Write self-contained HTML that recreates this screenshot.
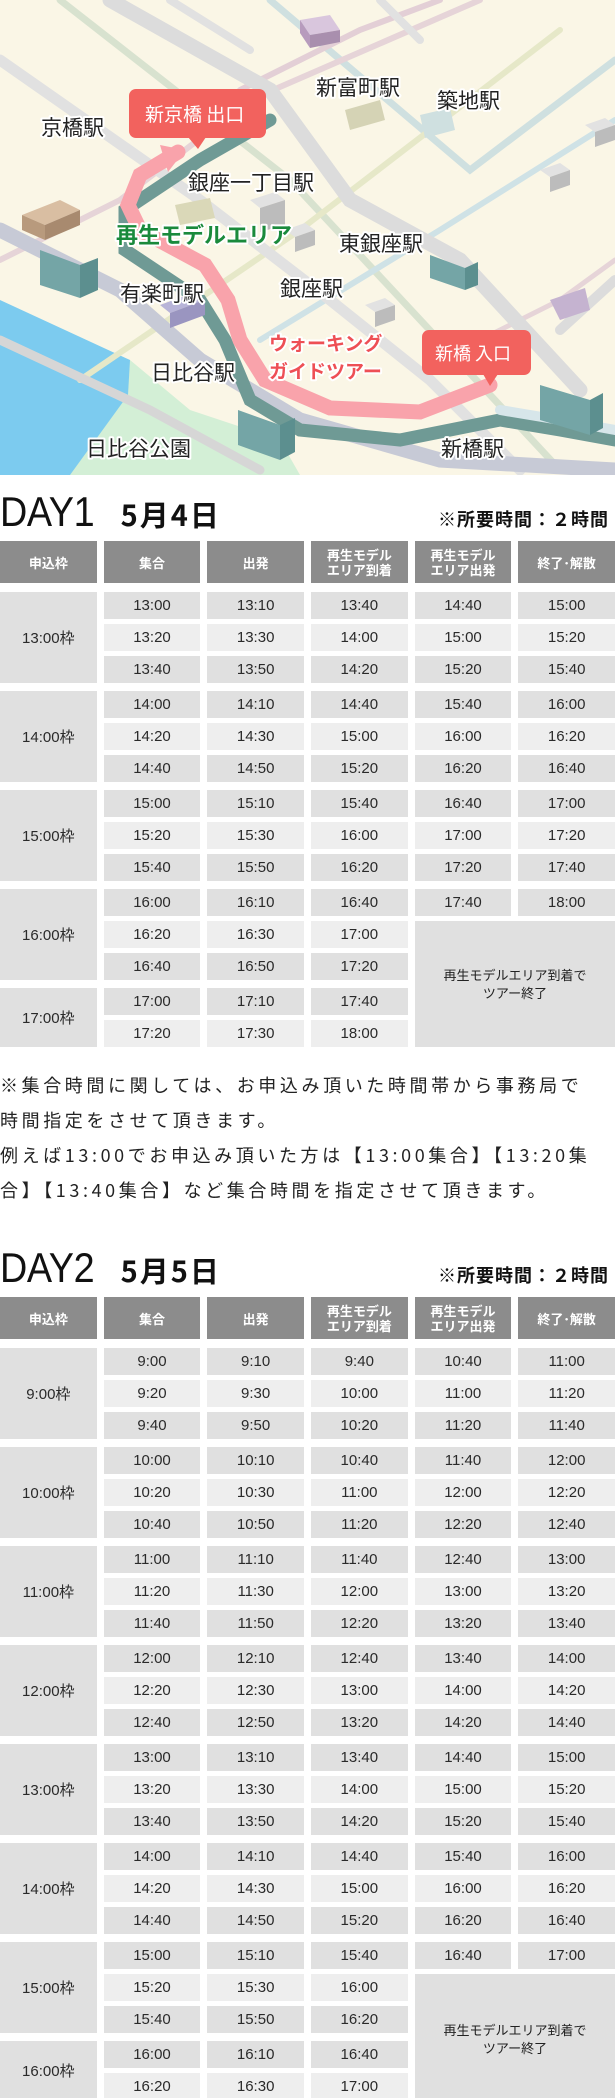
<!DOCTYPE html>
<html><head><meta charset="utf-8">
<style>
*{margin:0;padding:0;box-sizing:border-box}
html,body{width:615px;height:2098px;overflow:hidden;background:#fff}
body{position:relative;font-family:"Liberation Sans","Noto Sans CJK JP",sans-serif;color:#222}
.map{position:absolute;left:0;top:0;width:615px;height:475px}
.title{position:absolute;left:0;width:615px;display:flex;align-items:baseline;line-height:42px}
.day{font-size:42px;font-family:"Liberation Sans",sans-serif;transform:scaleX(.9);transform-origin:left;letter-spacing:-.5px;color:#111}
.date{font-size:29px;font-weight:bold;margin-left:16px;letter-spacing:2px;font-family:"Noto Sans CJK JP",sans-serif;color:#111}
.req{margin-left:auto;margin-right:6px;font-size:18px;font-weight:bold;letter-spacing:1px;font-family:"Noto Sans CJK JP",sans-serif;color:#111}
.hdr{position:absolute;left:0;width:615px;height:42px;display:grid;grid-template-columns:repeat(6,1fr);column-gap:7px}
.hdr div{background:#8c8c8c;color:#fff;font-weight:bold;font-size:13px;line-height:15px;display:flex;align-items:center;justify-content:center;text-align:center;font-family:"Noto Sans CJK JP",sans-serif}
.tbl{position:absolute;left:0;width:615px}
.g{display:grid;grid-template-columns:repeat(6,1fr);column-gap:7px;row-gap:5px;grid-auto-rows:27px;margin-bottom:8px}
.g div{display:flex;align-items:center;justify-content:center;font-size:15px;color:#2a2a2a}
.l{background:#e0e0e0;grid-column:1}
.d{background:#e0e0e0}
.w{background:#eeeeee}
.e{background:transparent}
.m{position:absolute;left:415px;width:200px;background:#e0e0e0;display:flex;align-items:center;justify-content:center;text-align:center;font-size:13px;line-height:18px;font-family:"Noto Sans CJK JP",sans-serif;color:#222}
.note{position:absolute;left:0;top:1068px;width:615px;font-size:18px;line-height:35px;letter-spacing:3.6px;font-family:"Noto Sans CJK JP",sans-serif;color:#222;white-space:nowrap}
</style></head><body>

<svg class="map" viewBox="0 0 615 475" xmlns="http://www.w3.org/2000/svg">
<rect width="615" height="475" fill="#faf6e6"/>
<path d="M0 330 L130 360 L190 410 L280 440 L300 475 L0 475Z" fill="#d3efd6"/>
<path d="M0 300 L130 360 L128 395 L70 475 L0 475Z" fill="#7ccbef"/>
<g fill="none" stroke-linecap="round">
<path d="M60 0 L290 180 L560 470" stroke="#d8e2cf" stroke-width="7"/>
<path d="M270 0 L470 170 L615 60" stroke="#cfe0e0" stroke-width="7"/>
<path d="M240 90 L360 30 L440 0" stroke="#e3cfd6" stroke-width="6"/>
<path d="M0 260 L120 200 L250 100 L480 0" stroke="#e6d4d8" stroke-width="6"/>
<path d="M80 380 L300 230 L560 30" stroke="#e6e8c8" stroke-width="6"/>
<path d="M260 340 L440 230 L615 120" stroke="#cfe2e6" stroke-width="6"/>
<path d="M440 360 L560 300 L615 260" stroke="#e6d4d8" stroke-width="5"/>
<path d="M110 0 L270 90 L350 200 L460 260 L580 390" stroke="#dcdcdc" stroke-width="15"/>
<path d="M0 60 L200 200 L330 300 L430 380 L520 470" stroke="#e1e1e1" stroke-width="11"/>
<path d="M0 230 L120 290 L200 360 L300 420 L440 460 L615 470" stroke="#c7cad6" stroke-width="15"/>
<path d="M0 340 L150 410 L260 470" stroke="#d6d6d6" stroke-width="9"/>
<path d="M560 330 L615 280" stroke="#dcdcdc" stroke-width="10"/>
<path d="M380 0 L420 40" stroke="#e1e1e1" stroke-width="8"/>
<path d="M170 0 L250 50" stroke="#e1e1e1" stroke-width="8"/>
<path d="M270 120 L200 160 L125 210 L125 250 L200 300 L225 340 L250 400 L300 430 L400 440 L500 420 L560 430 L615 440" stroke="#6f9a95" stroke-width="13"/>
<path d="M500 410 L560 420 L615 430" stroke="#d7e6ea" stroke-width="10"/>
<path d="M178 152 L140 175 L128 205 L140 230 L205 265 L228 300 L240 340 L265 380 L330 408 L420 412 L490 385" stroke="#f9a3ab" stroke-width="15"/>
</g>
<path d="M160 145 L185 150 L168 172Z" fill="#f9a3ab"/>
<g>
<path d="M300 20 L330 15 L340 30 L310 35Z" fill="#d9c6dd"/><path d="M300 20 L310 35 L310 48 L300 33Z" fill="#b79bbd"/><path d="M310 35 L340 30 L340 42 L310 48Z" fill="#a98fae"/>
<path d="M22 215 L60 200 L80 210 L45 225Z" fill="#d9bea2"/><path d="M22 215 L45 225 L45 240 L22 230Z" fill="#b89a7d"/><path d="M45 225 L80 210 L80 225 L45 240Z" fill="#a88a6f"/>
<path d="M40 250 L80 265 L80 298 L40 285Z" fill="#74a5a6"/><path d="M80 265 L98 258 L98 290 L80 298Z" fill="#5c8f8f"/>
<path d="M238 410 L280 425 L280 460 L238 445Z" fill="#74a5a6"/><path d="M280 425 L295 418 L295 452 L280 460Z" fill="#5c8f8f"/>
<path d="M430 255 L465 268 L465 290 L430 278Z" fill="#74a5a6"/><path d="M465 268 L478 262 L478 285 L465 290Z" fill="#5c8f8f"/>
<path d="M540 385 L590 400 L590 435 L540 420Z" fill="#74a5a6"/><path d="M590 400 L603 393 L603 428 L590 435Z" fill="#5c8f8f"/>
<path d="M540 170 L560 163 L570 170 L550 177Z" fill="#e2e2e2"/><path d="M550 177 L570 170 L570 185 L550 192Z" fill="#bcbcbc"/>
<path d="M585 125 L605 118 L615 125 L595 132Z" fill="#e2e2e2"/><path d="M595 132 L615 125 L615 140 L595 147Z" fill="#bcbcbc"/>
<path d="M250 200 L275 192 L285 200 L260 208Z" fill="#e2e2e2"/><path d="M260 208 L285 200 L285 225 L260 232Z" fill="#bcbcbc"/>
<path d="M285 230 L305 223 L315 230 L295 237Z" fill="#e2e2e2"/><path d="M295 237 L315 230 L315 245 L295 252Z" fill="#bcbcbc"/>
<path d="M365 305 L385 298 L395 305 L375 312Z" fill="#e2e2e2"/><path d="M375 312 L395 305 L395 320 L375 327Z" fill="#bcbcbc"/>
<path d="M550 300 L585 288 L590 310 L560 320Z" fill="#c5b3d0"/>
<path d="M160 305 L195 292 L205 300 L170 313Z" fill="#b8b4d8"/><path d="M170 313 L205 300 L205 315 L170 328Z" fill="#9a95c0"/>
<path d="M345 110 L380 100 L385 120 L350 130Z" fill="#d5d3b5"/>
<path d="M420 115 L450 108 L455 130 L425 138Z" fill="#cfe0e0"/>
<path d="M175 205 L210 198 L215 218 L180 225Z" fill="#dad8b8"/>
</g>
<g font-family="Noto Sans CJK JP,sans-serif" font-size="21" fill="#222" stroke="#fff" stroke-width="4" paint-order="stroke" stroke-linejoin="round">
<text x="41" y="135">京橋駅</text>
<text x="316" y="95">新富町駅</text>
<text x="437" y="108">築地駅</text>
<text x="188" y="190">銀座一丁目駅</text>
<text x="339" y="251">東銀座駅</text>
<text x="120" y="301">有楽町駅</text>
<text x="280" y="296">銀座駅</text>
<text x="151" y="380">日比谷駅</text>
<text x="86" y="456">日比谷公園</text>
<text x="441" y="456">新橋駅</text>
<text x="116" y="243" font-weight="bold" fill="#1a8a3c" font-size="22">再生モデルエリア</text>
<text x="269" y="350" font-weight="bold" fill="#ee4f55" font-size="19">ウォーキング</text>
<text x="269" y="378" font-weight="bold" fill="#ee4f55" font-size="19">ガイドツアー</text>
</g>
<g font-family="Noto Sans CJK JP,sans-serif" fill="#fff">
<rect x="129" y="89" width="137" height="49" rx="7" fill="#f2625e"/>
<path d="M188 137 L198 149 L206 137Z" fill="#f2625e"/>
<text x="145" y="121" font-size="19">新京橋 出口</text>
<rect x="422" y="330" width="109" height="45" rx="7" fill="#f2625e"/>
<path d="M483 374 L490 386 L498 374Z" fill="#f2625e"/>
<text x="435" y="360" font-size="18">新橋 入口</text>
</g>
</svg>

<div class="title" style="top:491px"><span class="day">DAY1</span><span class="date">5月4日</span><span class="req">※所要時間：２時間</span></div>
<div class="hdr" style="top:541px"><div>申込枠</div><div>集合</div><div>出発</div><div>再生モデル<br>エリア到着</div><div>再生モデル<br>エリア出発</div><div>終了･解散</div></div>
<div class="tbl" style="top:592px">
<div class="g"><div class="l" style="grid-row:1/4">13:00枠</div>
<div class="d">13:00</div><div class="d">13:10</div><div class="d">13:40</div><div class="d">14:40</div><div class="d">15:00</div>
<div class="w">13:20</div><div class="w">13:30</div><div class="w">14:00</div><div class="w">15:00</div><div class="w">15:20</div>
<div class="d">13:40</div><div class="d">13:50</div><div class="d">14:20</div><div class="d">15:20</div><div class="d">15:40</div></div>
<div class="g"><div class="l" style="grid-row:1/4">14:00枠</div>
<div class="d">14:00</div><div class="d">14:10</div><div class="d">14:40</div><div class="d">15:40</div><div class="d">16:00</div>
<div class="w">14:20</div><div class="w">14:30</div><div class="w">15:00</div><div class="w">16:00</div><div class="w">16:20</div>
<div class="d">14:40</div><div class="d">14:50</div><div class="d">15:20</div><div class="d">16:20</div><div class="d">16:40</div></div>
<div class="g"><div class="l" style="grid-row:1/4">15:00枠</div>
<div class="d">15:00</div><div class="d">15:10</div><div class="d">15:40</div><div class="d">16:40</div><div class="d">17:00</div>
<div class="w">15:20</div><div class="w">15:30</div><div class="w">16:00</div><div class="w">17:00</div><div class="w">17:20</div>
<div class="d">15:40</div><div class="d">15:50</div><div class="d">16:20</div><div class="d">17:20</div><div class="d">17:40</div></div>
<div class="g"><div class="l" style="grid-row:1/4">16:00枠</div>
<div class="d">16:00</div><div class="d">16:10</div><div class="d">16:40</div><div class="d">17:40</div><div class="d">18:00</div>
<div class="w">16:20</div><div class="w">16:30</div><div class="w">17:00</div><div class="e"></div><div class="e"></div>
<div class="d">16:40</div><div class="d">16:50</div><div class="d">17:20</div><div class="e"></div><div class="e"></div></div>
<div class="g"><div class="l" style="grid-row:1/3">17:00枠</div>
<div class="d">17:00</div><div class="d">17:10</div><div class="d">17:40</div><div class="e"></div><div class="e"></div>
<div class="w">17:20</div><div class="w">17:30</div><div class="w">18:00</div><div class="e"></div><div class="e"></div></div>
</div>
<div class="m" style="top:921px;height:126px">再生モデルエリア到着で<br>ツアー終了</div>

<div class="note">※集合時間に関しては、お申込み頂いた時間帯から事務局で<br>時間指定をさせて頂きます。<br>例えば13:00でお申込み頂いた方は【13:00集合】【13:20集<br>合】【13:40集合】など集合時間を指定させて頂きます。</div>

<div class="title" style="top:1247px"><span class="day">DAY2</span><span class="date">5月5日</span><span class="req">※所要時間：２時間</span></div>
<div class="hdr" style="top:1297px"><div>申込枠</div><div>集合</div><div>出発</div><div>再生モデル<br>エリア到着</div><div>再生モデル<br>エリア出発</div><div>終了･解散</div></div>
<div class="tbl" style="top:1348px">
<div class="g"><div class="l" style="grid-row:1/4">9:00枠</div>
<div class="d">9:00</div><div class="d">9:10</div><div class="d">9:40</div><div class="d">10:40</div><div class="d">11:00</div>
<div class="w">9:20</div><div class="w">9:30</div><div class="w">10:00</div><div class="w">11:00</div><div class="w">11:20</div>
<div class="d">9:40</div><div class="d">9:50</div><div class="d">10:20</div><div class="d">11:20</div><div class="d">11:40</div></div>
<div class="g"><div class="l" style="grid-row:1/4">10:00枠</div>
<div class="d">10:00</div><div class="d">10:10</div><div class="d">10:40</div><div class="d">11:40</div><div class="d">12:00</div>
<div class="w">10:20</div><div class="w">10:30</div><div class="w">11:00</div><div class="w">12:00</div><div class="w">12:20</div>
<div class="d">10:40</div><div class="d">10:50</div><div class="d">11:20</div><div class="d">12:20</div><div class="d">12:40</div></div>
<div class="g"><div class="l" style="grid-row:1/4">11:00枠</div>
<div class="d">11:00</div><div class="d">11:10</div><div class="d">11:40</div><div class="d">12:40</div><div class="d">13:00</div>
<div class="w">11:20</div><div class="w">11:30</div><div class="w">12:00</div><div class="w">13:00</div><div class="w">13:20</div>
<div class="d">11:40</div><div class="d">11:50</div><div class="d">12:20</div><div class="d">13:20</div><div class="d">13:40</div></div>
<div class="g"><div class="l" style="grid-row:1/4">12:00枠</div>
<div class="d">12:00</div><div class="d">12:10</div><div class="d">12:40</div><div class="d">13:40</div><div class="d">14:00</div>
<div class="w">12:20</div><div class="w">12:30</div><div class="w">13:00</div><div class="w">14:00</div><div class="w">14:20</div>
<div class="d">12:40</div><div class="d">12:50</div><div class="d">13:20</div><div class="d">14:20</div><div class="d">14:40</div></div>
<div class="g"><div class="l" style="grid-row:1/4">13:00枠</div>
<div class="d">13:00</div><div class="d">13:10</div><div class="d">13:40</div><div class="d">14:40</div><div class="d">15:00</div>
<div class="w">13:20</div><div class="w">13:30</div><div class="w">14:00</div><div class="w">15:00</div><div class="w">15:20</div>
<div class="d">13:40</div><div class="d">13:50</div><div class="d">14:20</div><div class="d">15:20</div><div class="d">15:40</div></div>
<div class="g"><div class="l" style="grid-row:1/4">14:00枠</div>
<div class="d">14:00</div><div class="d">14:10</div><div class="d">14:40</div><div class="d">15:40</div><div class="d">16:00</div>
<div class="w">14:20</div><div class="w">14:30</div><div class="w">15:00</div><div class="w">16:00</div><div class="w">16:20</div>
<div class="d">14:40</div><div class="d">14:50</div><div class="d">15:20</div><div class="d">16:20</div><div class="d">16:40</div></div>
<div class="g"><div class="l" style="grid-row:1/4">15:00枠</div>
<div class="d">15:00</div><div class="d">15:10</div><div class="d">15:40</div><div class="d">16:40</div><div class="d">17:00</div>
<div class="w">15:20</div><div class="w">15:30</div><div class="w">16:00</div><div class="e"></div><div class="e"></div>
<div class="d">15:40</div><div class="d">15:50</div><div class="d">16:20</div><div class="e"></div><div class="e"></div></div>
<div class="g"><div class="l" style="grid-row:1/3">16:00枠</div>
<div class="d">16:00</div><div class="d">16:10</div><div class="d">16:40</div><div class="e"></div><div class="e"></div>
<div class="w">16:20</div><div class="w">16:30</div><div class="w">17:00</div><div class="e"></div><div class="e"></div></div>
</div>
<div class="m" style="top:1974px;height:130px">再生モデルエリア到着で<br>ツアー終了</div>
</body></html>
